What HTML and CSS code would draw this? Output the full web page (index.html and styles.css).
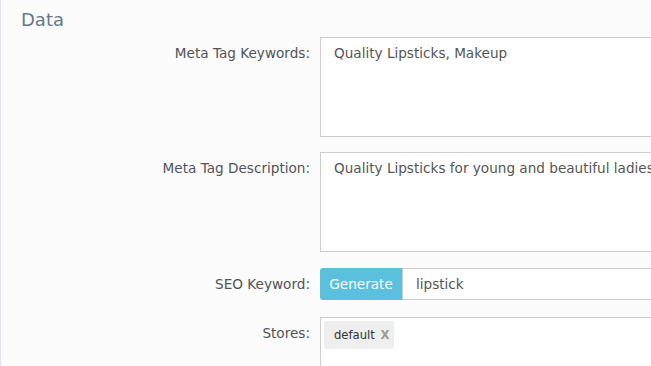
FILE: index.html
```html
<!DOCTYPE html>
<html lang="en">
<head>
  <meta charset="UTF-8" />
  <title>Data</title>
  <link rel="stylesheet" href="styles.css">
</head>
<body>
  <div class="panel">
    <h3 class="panel-title">Data</h3>

    <div class="form-row">
      <label for="metaKeywords">Meta Tag Keywords:</label>
      <textarea id="metaKeywords" class="field">Quality Lipsticks, Makeup</textarea>
    </div>

    <div class="form-row">
      <label for="metaDescription">Meta Tag Description:</label>
      <textarea id="metaDescription" class="field">Quality Lipsticks for young and beautiful ladies</textarea>
    </div>

    <div class="form-row form-row-inline">
      <label for="seoKeyword">SEO Keyword:</label>
      <div class="input-group">
        <button class="btn-info" type="button">Generate</button>
        <input type="text" id="seoKeyword" class="field" value="lipstick" />
      </div>
    </div>

    <div class="form-row">
      <label>Stores:</label>
      <div class="field tag-box">
        <span class="tag">default <b class="tag-remove">X</b></span>
      </div>
    </div>
  </div>
</body>
</html>
```

FILE: styles.css
```css
html, body {
  margin: 0;
  padding: 0;
  height: 100%;
  overflow: hidden;
}

body {
  background: #fbfbfb;
  border-left: 1px solid #dfe4ea;
  font-family: 'DejaVu Sans', Verdana, sans-serif;
  font-size: 13.6px;
  color: #555;
}

.panel {
  padding: 9px 0 0 20px;
}

.panel-title {
  margin: 0 0 7px 0;
  font-size: 18px;
  font-weight: normal;
  color: #66788a;
}

.form-row {
  display: grid;
  grid-template-columns: 289px 400px;
  column-gap: 10px;
  margin-bottom: 15px;
}

.form-row label {
  text-align: right;
  padding-top: 8px;
  line-height: 16px;
  color: #4f5459;
}

.form-row-inline {
  margin-top: 16px;
  margin-bottom: 17px;
}

.field {
  box-sizing: border-box;
  border: 1px solid #ccc;
  background: #fff;
  font-family: inherit;
  font-size: 13.6px;
  color: #555;
  outline: none;
}

textarea.field {
  height: 100px;
  padding: 7px 12px 7px 13px;
  line-height: 16px;
  resize: none;
  overflow: hidden;
}

.input-group {
  display: flex;
  height: 32px;
}

.btn-info {
  width: 82px;
  border: none;
  border-radius: 3px 0 0 3px;
  background: #5bc0de;
  color: #fff;
  font-family: inherit;
  font-size: 13.6px;
  padding: 0;
}

.input-group .field {
  flex: 1;
  padding: 0 13px;
  height: 32px;
}

.tag-box {
  height: 60px;
  padding: 3px;
}

.tag {
  display: inline-block;
  padding: 6px 5px 6px 10px;
  background: #eee;
  border-radius: 2px;
  font-size: 11.6px;
  color: #333;
  line-height: 16px;
}

.tag-remove {
  color: #999;
  margin-left: 2px;
}
```
